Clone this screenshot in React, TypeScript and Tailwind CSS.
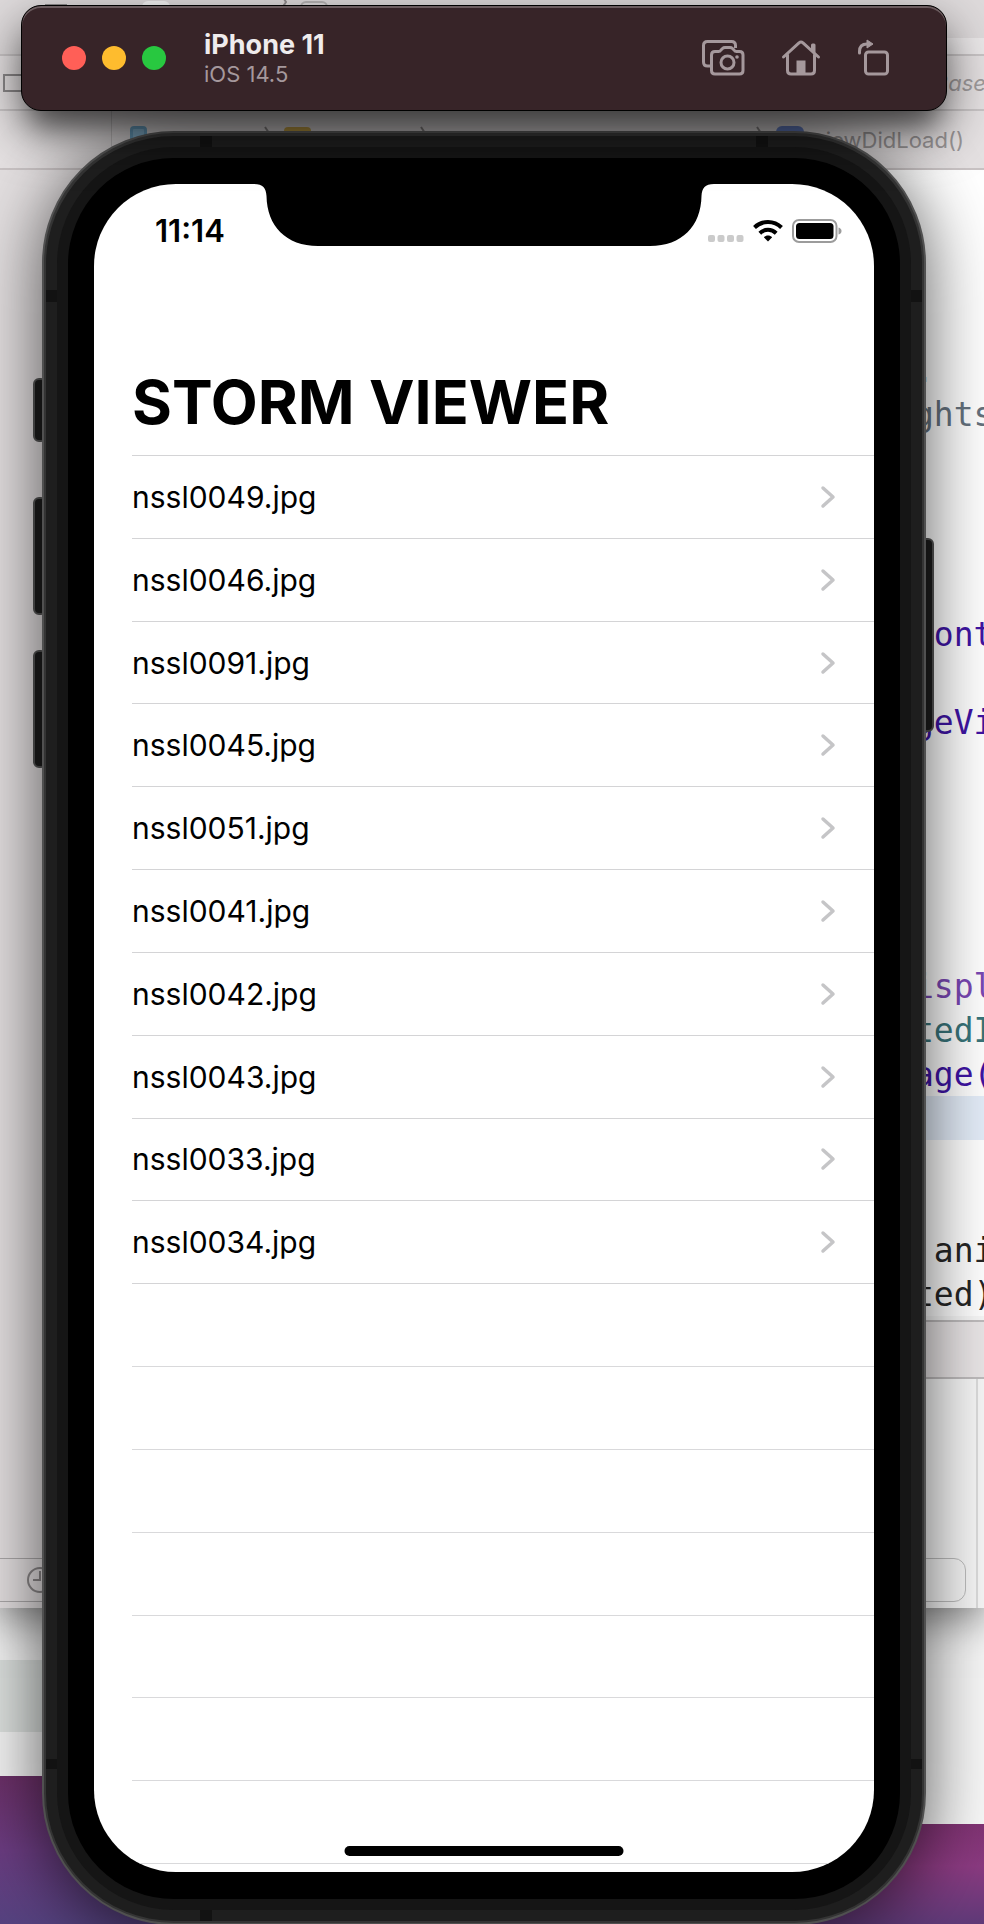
import type { ReactNode } from "react";

const files = [
  "nssl0049.jpg",
  "nssl0046.jpg",
  "nssl0091.jpg",
  "nssl0045.jpg",
  "nssl0051.jpg",
  "nssl0041.jpg",
  "nssl0042.jpg",
  "nssl0043.jpg",
  "nssl0033.jpg",
  "nssl0034.jpg",
];

const emptyRows = [0, 1, 2, 3, 4, 5, 6];

type CodeLine = { text: string; tone: string };

const blank: CodeLine = { text: "", tone: "" };

const codeLines: CodeLine[] = [
  blank,
  blank,
  blank,
  blank,
  { text: ".", tone: "text-[#4a5560]" },
  { text: "ghts", tone: "text-[#65727e]" },
  blank,
  blank,
  blank,
  blank,
  { text: "Cont", tone: "text-[#3f14a4]" },
  blank,
  { text: "geVi", tone: "text-[#3f14a4]" },
  blank,
  blank,
  blank,
  blank,
  blank,
  { text: "ispl", tone: "text-[#7a48b4]" },
  { text: "tedI", tone: "text-[#39757b]" },
  { text: "age(", tone: "text-[#3f14a4]" },
  { text: "", tone: "bg-[#e4edf9]" },
  blank,
  blank,
  { text: " ani", tone: "text-[#262626]" },
  { text: "ted)", tone: "text-[#262626]" },
];

function CrumbChevron({ className }: { className: string }) {
  return (
    <svg className={`absolute ${className}`} width="8" height="20" viewBox="0 0 8 20" fill="none" stroke="#8f8b8c" strokeWidth="2">
      <path d="M1 1l6 9-6 9" />
    </svg>
  );
}

function Desktop() {
  return (
    <div className="absolute inset-0 flex flex-col bg-[linear-gradient(180deg,#792e69_0%,#792e69_93%,#8a3a80_97%,#5f3a78_100%)]" aria-hidden="true">
      <div className="absolute bottom-0 left-0 h-[148px] w-1/2 bg-[linear-gradient(180deg,#6c3068_0%,#6a3c80_50%,#55427f_100%)]" />

      <div className="relative z-10 flex h-[1608px] shrink-0 flex-col bg-[#f7f7f7] shadow-[0_10px_40px_rgba(0,0,0,0.5)]">
        <div className="relative h-[54px] shrink-0 bg-[#dedadb]">
          <div className="absolute left-[45px] top-[4px] h-[3px] w-[22px] bg-[#8e8b8c]" />
          <div className="absolute left-[142px] top-[1px] h-[20px] w-[28px] rounded-md bg-[#f3f2f2]" />
          <CrumbChevron className="left-[279px] -top-[8px]" />
          <div className="absolute left-[300px] top-[1px] h-[20px] w-[28px] rounded-md border-2 border-[#b5b2b2]" />
          <div className="absolute right-0 top-[38px] h-[16px] w-[492px] bg-[#ebe8e9]" />
        </div>
        <div className="relative flex h-[57px] shrink-0 items-center justify-end overflow-hidden border-y-2 border-[#c9c5c6] bg-[#e5e1e2]">
          <div className="absolute left-[3px] top-[18px] h-[18px] w-[30px] border-2 border-[#8c898a]" />
          <span className="-mr-[2px] pt-[2px] font-[Inter,sans-serif] text-[22px] italic text-[#a09c9d]">Base</span>
        </div>
        <div className="relative flex h-[59px] shrink-0 items-center justify-end border-b-2 border-[#c9c3c4] bg-[#e5e1e2] pt-[2px] pr-[20px]">
          <div className="absolute left-[111px] top-0 h-full w-px bg-[#c9c5c6]" />
          <div className="absolute left-[130px] top-[15px] h-[24px] w-[17px] rounded-sm border-[3px] border-[#6fa9cc] bg-[#8fc0de]" />
          <CrumbChevron className="left-[264px] top-[15px]" />
          <div className="absolute left-[284px] top-[16px] h-[20px] w-[27px] rounded-sm bg-[#cfab4a]" />
          <CrumbChevron className="left-[420px] top-[15px]" />
          <CrumbChevron className="left-[756px] top-[15px]" />
          <div className="absolute left-[776px] top-[15px] h-[24px] w-[28px] rounded-md bg-[#6a84cc]" />
          <span className="font-[Inter,sans-serif] text-[22px] text-[#9b9798]">viewDidLoad()</span>
        </div>
        <div className="flex min-h-0 flex-1">
          <div className="flex w-[111px] flex-col bg-[#e3dfe0]">
            <div className="mt-auto mb-[6px] flex h-[44px] items-center justify-end border-y border-[#aaa7a8] pr-[58px]">
              <svg width="26" height="26" viewBox="0 0 26 26" fill="none" stroke="#8b8788" strokeWidth="2">
                <circle cx="13" cy="13" r="12" />
                <path d="M13 4v9H6" />
              </svg>
            </div>
          </div>
          <div className="flex min-w-0 flex-1 flex-col">
            <pre className="shrink-0 overflow-hidden bg-white pt-[2px] font-['DejaVu_Sans_Mono',monospace] text-[33px] leading-[44px]">
              {codeLines.map((line, i) => (
                <div key={i} className={`flex h-[44px] justify-end ${line.tone}`}>
                  <span className="w-[70px] leading-[46px]">{line.text}</span>
                </div>
              ))}
            </pre>
            <div className="mt-[4px] h-[59px] shrink-0 border-y-2 border-[#bfbcbd] bg-[#eae6e7]" />
            <div className="flex flex-1">
              <div className="flex flex-1 flex-col justify-end border-r-2 border-[#dcdcdc] pr-[10px] pb-[6px]">
                <div className="h-[44px] rounded-xl border border-[#bdbdbd]" />
              </div>
              <div className="w-[6px]" />
            </div>
          </div>
        </div>
      </div>

      <div className="flex items-start">
        <div className="h-[168px] w-1/2 bg-[#f4f4f4] pt-[52px]">
          <div className="h-[72px] bg-[#dde1df]" />
        </div>
        <div className="h-[216px] w-1/2 bg-[#f8f8f8]" />
      </div>
    </div>
  );
}

function ToolButton({ label, children }: { label: string; children: ReactNode }) {
  return (
    <button type="button" aria-label={label} className="flex h-[40px] items-center justify-center text-[#a5989c]">
      {children}
    </button>
  );
}

function SimulatorBar() {
  return (
    <header className="relative z-20 mr-[37px] ml-[21px] mt-[5px] flex h-[106px] shrink-0 items-center rounded-[20px] border border-black bg-[#372428] pr-[55px] pl-[40px] font-[Inter,sans-serif] shadow-[inset_0_2px_0_#6b5c5f,0_20px_50px_rgba(0,0,0,0.6),0_24px_24px_-10px_rgba(0,0,0,0.35)]">
      <div className="flex gap-4">
        <button type="button" aria-label="Close" className="size-6 rounded-full bg-[#ff5f57]" />
        <button type="button" aria-label="Minimize" className="size-6 rounded-full bg-[#febc2e]" />
        <button type="button" aria-label="Zoom" className="size-6 rounded-full bg-[#28c840]" />
      </div>
      <div className="ml-[38px] flex flex-col pt-[2px]">
        <span className="text-[27px] leading-[30px] font-bold text-[#efeced]">iPhone 11</span>
        <span className="text-[22px] leading-[28px] text-[#a5989c]">iOS 14.5</span>
      </div>
      <div className="ml-auto flex items-center gap-[36px]">
        <ToolButton label="Take screenshot">
          <svg width="44" height="38" viewBox="0 0 44 38" fill="none" stroke="currentColor" strokeWidth="3" strokeLinejoin="round">
            <path d="M9 27H6.500Q2.500 27 2.500 23V6.500Q2.500 2.500 6.500 2.500H30.500Q34.500 2.500 34.500 6.500V9" />
            <path d="M14 12.500H17.500Q19 12.500 20 11L21.500 9.500Q22.500 8.500 24 8.500H29Q30.500 8.500 31.500 9.500L33 11Q34 12.500 35.500 12.500H38.500Q42 12.500 42 16V31.500Q42 35 38.500 35H14Q10.500 35 10.500 31.500V16Q10.500 12.500 14 12.500Z" />
            <circle cx="26.500" cy="23.500" r="6.500" />
            <circle cx="36" cy="18" r="1.800" fill="currentColor" stroke="none" />
          </svg>
        </ToolButton>
        <ToolButton label="Home">
          <svg width="40" height="38" viewBox="0 0 40 38" fill="none" stroke="currentColor" strokeWidth="3" strokeLinejoin="round" strokeLinecap="round">
            <path d="M2.500 18L18 3.800Q20 2.200 22 3.800L37.500 18" />
            <path d="M6.500 16V31.500Q6.500 35 10 35H30Q33.500 35 33.500 31.500V16" />
            <path d="M31.500 11V6H33V13" />
            <path d="M15.500 21.500H24.500V35H15.500Z" fill="currentColor" stroke="none" />
          </svg>
        </ToolButton>
        <ToolButton label="Rotate">
          <svg width="34" height="38" viewBox="0 0 34 38" fill="none" stroke="currentColor" strokeWidth="3">
            <rect x="8.500" y="13" width="22" height="22" rx="3" />
            <path d="M2.500 14V12.500Q2.500 5 10 5" strokeLinecap="round" />
            <path d="M10 1L16 5L10 9Z" fill="currentColor" stroke="currentColor" strokeWidth="1" strokeLinejoin="round" />
          </svg>
        </ToolButton>
      </div>
    </header>
  );
}

function SideButton({ className }: { className: string }) {
  return <div className={`absolute w-[14px] rounded-md border-2 border-[#555555] bg-[#1d1d1d] ${className}`} />;
}

function StatusBar() {
  return (
    <div className="flex h-[93px] shrink-0 items-center justify-between pr-[32px] pl-[61px]">
      <time className="text-[31px] leading-[36px] font-semibold">11:14</time>
      <div className="flex items-center gap-[9px]">
        <svg width="36" height="24" viewBox="0 0 36 24" fill="#cbcbcb">
          <rect x="0" y="16" width="7" height="7" rx="2" />
          <rect x="9.500" y="16" width="7" height="7" rx="2" />
          <rect x="19" y="16" width="7" height="7" rx="2" />
          <rect x="28.500" y="16" width="7" height="7" rx="2" />
        </svg>
        <svg width="30" height="24" viewBox="0 0 30 24" fill="none" stroke="#000" strokeWidth="4">
          <path d="M1.500 8.500C9 1.200 21 1.200 28.500 8.500" />
          <path d="M6.800 14.200C11.500 9.700 18.500 9.700 23.200 14.200" />
          <path d="M15 22.500L10.800 18.300C13.200 16 16.800 16 19.200 18.300Z" fill="#000" stroke="none" />
        </svg>
        <svg width="50" height="24" viewBox="0 0 50 24">
          <rect x="1" y="1" width="43.500" height="22" rx="6" fill="none" stroke="#9c9c9c" strokeWidth="2" />
          <rect x="4" y="4" width="37.500" height="16" rx="3.500" />
          <path d="M46.500 8.500Q49.500 9.500 49.500 12T46.500 15.500Z" fill="#9c9c9c" />
        </svg>
      </div>
    </div>
  );
}

function Screen() {
  return (
    <main className="relative flex flex-1 flex-col overflow-hidden rounded-[82px] bg-white font-[Inter,sans-serif] text-black">
      <svg className="absolute top-0 left-1/2 -translate-x-1/2" width="460" height="63" viewBox="0 0 460 63">
        <path d="M0 0C9 0 12 4 12.500 12C13 42 32 62 64 62H396C428 62 447 42 447.500 12C448 4 451 0 460 0Z" />
      </svg>
      <StatusBar />
      <h1 className="mt-[69px] flex h-[109px] shrink-0 items-center pt-[2px] pl-[38px] text-[61px] leading-[72px] font-bold">
        STORM VIEWER
      </h1>
      <ul className="ml-[38px] grid flex-1 auto-rows-fr border-t border-[#d4d4d6]">
        {files.map((name) => (
          <li key={name} className="flex border-b border-[#d4d4d6]">
            <a href={`#${name}`} className="flex flex-1 items-center justify-between pr-[38px] text-[30px] leading-[40px]">
              {name}
              <svg width="16" height="24" viewBox="0 0 16 24" fill="none" stroke="#c5c5c7" strokeWidth="3.500" strokeLinecap="round" strokeLinejoin="round">
                <path d="M3 3L13 12L3 21" />
              </svg>
            </a>
          </li>
        ))}
        {emptyRows.map((n) => (
          <li key={n} className="border-b border-[#d9d9db]" />
        ))}
      </ul>
      <div className="h-[8px] shrink-0" />
      <div className="absolute bottom-[16px] left-1/2 h-[10px] w-[279px] -translate-x-1/2 rounded-full bg-black" />
    </main>
  );
}

function Phone() {
  return (
    <div className="relative z-10 mt-[20px] mr-[58px] -mb-[1px] ml-[42px] flex flex-1 flex-col">
      <SideButton className="top-[247px] -left-[9px] h-[64px]" />
      <SideButton className="top-[366px] -left-[9px] h-[118px]" />
      <SideButton className="top-[519px] -left-[9px] h-[118px]" />
      <SideButton className="top-[407px] -right-[8px] h-[194px]" />
      <div className="relative flex flex-1 flex-col rounded-[132px] border-2 border-[#505050] bg-[#343434] p-[2px] pt-[3px] shadow-[0_10px_70px_rgba(0,0,0,0.65)]">
        <div className="relative flex flex-1 flex-col rounded-[128px] bg-[#1e1e1e] p-[11px]">
          <div className="absolute top-0 left-[154px] h-[11px] w-[12px] bg-[#121212]" />
          <div className="absolute top-0 right-[154px] h-[11px] w-[12px] bg-[#121212]" />
          <div className="absolute bottom-0 left-[154px] h-[11px] w-[12px] bg-[#121212]" />
          <div className="absolute top-[154px] left-0 h-[12px] w-[11px] bg-[#121212]" />
          <div className="absolute top-[154px] right-0 h-[12px] w-[11px] bg-[#121212]" />
          <div className="absolute bottom-[152px] left-0 h-[10px] w-[11px] bg-[#121212]" />
          <div className="absolute right-0 bottom-[152px] h-[10px] w-[11px] bg-[#121212]" />
          <div className="flex flex-1 flex-col rounded-[117px] bg-[#151515] p-[11px]">
            <div className="flex flex-1 flex-col rounded-[106px] bg-black p-[26px] pb-[27px]">
              <Screen />
            </div>
          </div>
        </div>
      </div>
    </div>
  );
}

export default function App() {
  return (
    <div className="relative flex min-h-screen flex-col overflow-hidden">
      <Desktop />
      <SimulatorBar />
      <Phone />
    </div>
  );
}
